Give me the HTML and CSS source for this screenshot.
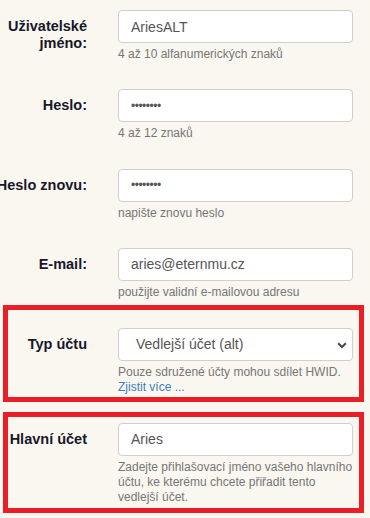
FILE: index.html
```html
<html>
<head>
  <title>Registrace</title>
  <meta name="viewport" content="width=device-width, initial-scale=1.0">
  <link rel="stylesheet" href="styles.css">
</head>
<body>
  <form class="register">
    <div class="basic">
      <div class="group">
        <label class="label"><span>Uživatelské jméno:</span></label>
        <div class="control">
          <input class="field" type="text" value="AriesALT">
          <div class="hint">4 až 10 alfanumerických znaků</div>
        </div>
      </div>
      <div class="group">
        <label class="label"><span>Heslo:</span></label>
        <div class="control">
          <input class="field" type="password" value="12345678">
          <div class="hint">4 až 12 znaků</div>
        </div>
      </div>
      <div class="group">
        <label class="label nowrap"><span>Heslo znovu:</span></label>
        <div class="control">
          <input class="field" type="password" value="12345678">
          <div class="hint">napište znovu heslo</div>
        </div>
      </div>
      <div class="group">
        <label class="label"><span>E-mail:</span></label>
        <div class="control">
          <input class="field" type="text" value="aries@eternmu.cz">
          <div class="hint">použijte validní e-mailovou adresu</div>
        </div>
      </div>
    </div>

    <div class="highlight first">
      <div class="group">
        <label class="label"><span>Typ účtu</span></label>
        <div class="control">
          <div class="select-wrap">
            <select class="field select">
              <option>Vedlejší účet (alt)</option>
              <option>Hlavní účet</option>
            </select>
            <svg class="chevron" width="10" height="7" viewBox="0 0 10 7">
              <path d="M1.2 1.3 L5 5 L8.8 1.3" fill="none" stroke="#444" stroke-width="2"/>
            </svg>
          </div>
          <div class="hint">Pouze sdružené účty mohou sdílet HWID. <a href="#">Zjistit více ...</a></div>
        </div>
      </div>
    </div>

    <div class="highlight second">
      <div class="group">
        <label class="label"><span>Hlavní účet</span></label>
        <div class="control">
          <input class="field" type="text" value="Aries">
          <div class="hint">Zadejte přihlašovací jméno vašeho hlavního účtu, ke kterému chcete přiřadit tento vedlejší účet.</div>
        </div>
      </div>
    </div>
  </form>
</body>
</html>
```

FILE: styles.css
```css
body {
  margin: 0;
  padding-top: 10px;
  background: #faf7f0;
  font-family: "Liberation Sans", Arial, sans-serif;
  overflow: hidden;
}
.basic {
  display: flex;
  flex-direction: column;
  gap: 27.3px;
}
.group {
  display: grid;
  grid-template-columns: 87px 235px;
  column-gap: 31px;
  align-items: start;
}
.label {
  display: flex;
  justify-content: flex-end;
  text-align: right;
  padding-top: 8px;
  font-size: 14.5px;
  line-height: 17px;
  font-weight: bold;
  color: #18182a;
}
.label.nowrap {
  white-space: nowrap;
}
.field {
  display: block;
  box-sizing: border-box;
  width: 100%;
  height: 33px;
  margin: 0;
  padding: 0 12px;
  border: 1px solid #cfcfcf;
  border-radius: 4px;
  background: #fff;
  font-family: "Liberation Sans", Arial, sans-serif;
  font-size: 14px;
  color: #555;
  outline: none;
}
.field[type="password"] {
  font-size: 12px;
  letter-spacing: -0.5px;
}
.select-wrap {
  position: relative;
}
.select {
  -webkit-appearance: none;
  appearance: none;
  padding-left: 17px;
}
.chevron {
  position: absolute;
  top: 14px;
  right: 6px;
  pointer-events: none;
}
.hint {
  margin-top: 4px;
  margin-right: -3px;
  font-size: 12px;
  line-height: 15px;
  color: #767676;
}
.hint a {
  color: #3a7dc4;
  text-decoration: none;
}
.highlight {
  margin: 0 6px 0 3px;
  border: 5px solid #e91e26;
}
.highlight .group {
  grid-template-columns: 79px 235px;
}
.highlight.first {
  margin-top: 5px;
  padding: 18px 0 2px;
}
.highlight.second {
  margin-top: 10px;
  padding: 6px 0 3px;
}
```
